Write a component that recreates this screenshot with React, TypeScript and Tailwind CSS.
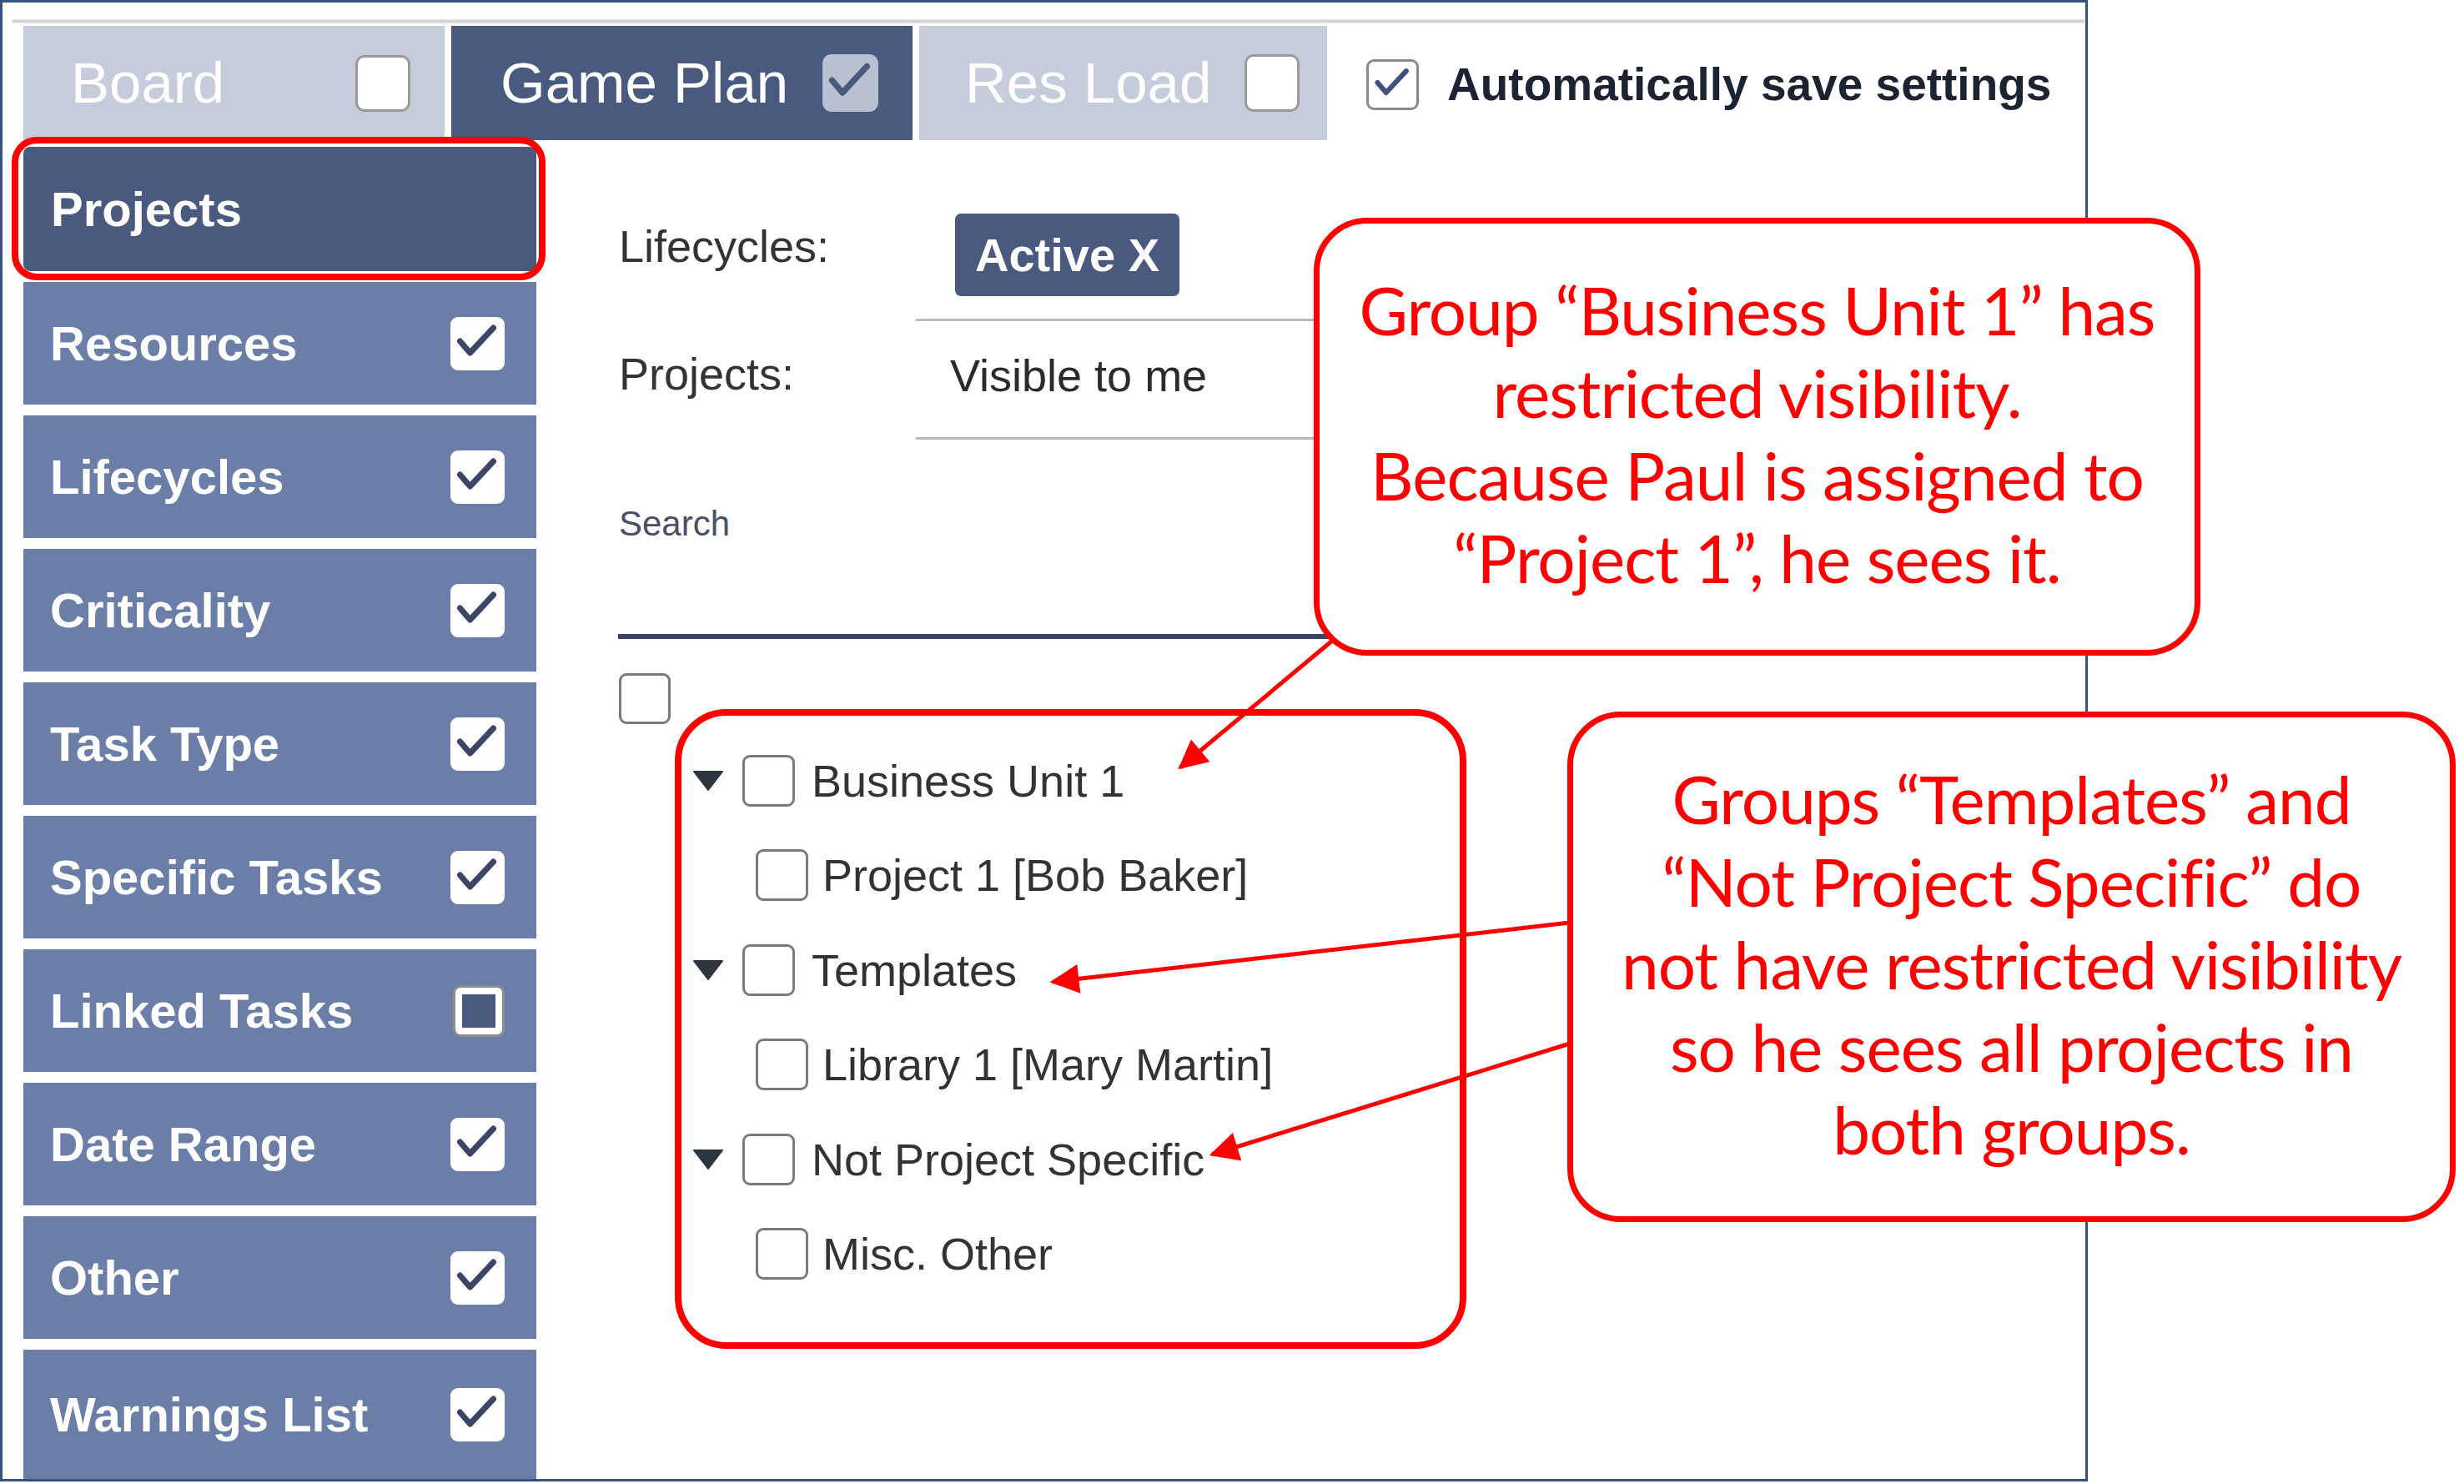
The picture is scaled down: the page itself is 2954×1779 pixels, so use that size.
import React from "react";

const Check = ({ color = "#3b4566", w = 7 }: { color?: string; w?: number }) => (
  <svg viewBox="0 0 64 64" className="w-full h-full">
    <path d="M11 29 L23 43 L51 13" fill="none" stroke={color} strokeWidth={w} strokeLinecap="round" strokeLinejoin="round" />
  </svg>
);

const Box = ({ className = "" }: { className?: string }) => (
  <div className={"shrink-0 w-[63px] h-[62px] rounded-[9px] border-[3px] border-[#7b7b7b] bg-white " + className} />
);

const Tri = () => (
  <svg viewBox="0 0 36 24" className="w-[36px] h-[24px] shrink-0">
    <polygon points="1,1 35,1 18,23" fill="#2d3540" stroke="#2d3540" strokeWidth="2" strokeLinejoin="round" />
  </svg>
);

type Item = { label: string; state: "check" | "ind" };
const items: Item[] = [
  { label: "Resources", state: "check" },
  { label: "Lifecycles", state: "check" },
  { label: "Criticality", state: "check" },
  { label: "Task Type", state: "check" },
  { label: "Specific Tasks", state: "check" },
  { label: "Linked Tasks", state: "ind" },
  { label: "Date Range", state: "check" },
  { label: "Other", state: "check" },
];

const SideCheck = ({ state }: { state: "check" | "ind" }) =>
  state === "check" ? (
    <div className="w-[65px] h-[64px] rounded-[9px] bg-white shrink-0 p-0">
      <Check />
    </div>
  ) : (
    <div className="w-[62px] h-[62px] rounded-[9px] bg-white border-[3px] border-[#8d8d8d] shrink-0 flex items-center justify-center">
      <div className="w-[40px] h-[40px] bg-[#4a5a7e]" />
    </div>
  );

const TreeGroup = ({ label }: { label: string }) => (
  <div className="h-[113.5px] flex items-center pl-[14px]">
    <Tri />
    <Box className="ml-[23px]" />
    <span className="ml-[20px] text-[54px] text-[#333] leading-none">{label}</span>
  </div>
);

const TreeChild = ({ label }: { label: string }) => (
  <div className="h-[113.5px] flex items-center pl-[89px]">
    <Box />
    <span className="ml-[17px] text-[54px] text-[#333] leading-none">{label}</span>
  </div>
);

export default function App() {
  return (
    <div className="w-[2954px] h-[1779px] bg-white relative overflow-hidden font-['Liberation_Sans',Arial,sans-serif]">
      <div className="w-[2503px] h-[1776px] border-[3px] border-[#36527e] flex flex-col">
        <div className="pt-[21px] pl-[12px] pr-[1px]">
          <div className="h-[3px] bg-[#d2d2d2] shadow-[0_0_3px_#c8c8c8]" />
        </div>
        {/* tabs */}
        <div className="mt-[4px] pl-[25px] flex items-center h-[137px]">
          <div className="w-[505px] h-full bg-[#c5cddc] flex items-center justify-between pl-[57px] pr-[41px]">
            <span className="text-white text-[69px] leading-none">Board</span>
            <div className="w-[66px] h-[68px] rounded-[11px] bg-white border-[3px] border-[#9a9a9a]" />
          </div>
          <div className="ml-[8px] w-[553px] h-full bg-[#4a5a7e] flex items-center justify-between pl-[59px] pr-[41px]">
            <span className="text-white text-[69px] leading-none">Game Plan</span>
            <div className="w-[67px] h-[69px] rounded-[11px] bg-[#b9c0d1]">
              <Check color="#4a5a7e" />
            </div>
          </div>
          <div className="ml-[8px] w-[489px] h-full bg-[#c5cddc] flex items-center justify-between pl-[55px] pr-[33px]">
            <span className="text-white text-[69px] leading-none">Res Load</span>
            <div className="w-[66px] h-[69px] rounded-[11px] bg-white border-[3px] border-[#9a9a9a]" />
          </div>
          <div className="ml-[47px] mt-[4px] w-[63px] h-[61px] rounded-[9px] bg-white border-[3px] border-[#8a8a8a]">
            <Check color="#3f5080" />
          </div>
          <span className="ml-[34px] mt-[4px] text-[55px] font-bold text-[#1c2333] leading-none">Automatically save settings</span>
        </div>
        {/* body */}
        <div className="mt-[8px] flex flex-1 min-h-0">
          <div className="ml-[25px] w-[615px] flex flex-col gap-[13px]">
            <div className="relative h-[149px] shrink-0 bg-[#4a5a7e] rounded-[8px] flex items-center pl-[33px]">
              <span className="text-white text-[58px] font-bold leading-none">Projects</span>
              <div className="absolute -left-[14px] -right-[11px] -top-[12px] -bottom-[11px] border-[8px] border-[#ff0000] rounded-[30px]" />
            </div>
            {items.map((it) => (
              <div key={it.label} className="h-[147px] shrink-0 bg-[#6b7ea7] flex items-center justify-between pl-[32px] pr-[38px]">
                <span className="text-white text-[58px] font-bold leading-none">{it.label}</span>
                <SideCheck state={it.state} />
              </div>
            ))}
            <div className="flex-1 bg-[#6b7ea7] flex items-center justify-between pl-[32px] pr-[38px]">
              <span className="text-white text-[58px] font-bold leading-none">Warnings List</span>
              <SideCheck state="check" />
            </div>
          </div>
          {/* main */}
          <div className="ml-[99px] flex-1 flex flex-col">
            <div className="h-[209px] flex">
              <div className="w-[356px] pt-[92px] text-[54px] leading-[54px] text-[#333]">Lifecycles:</div>
              <div className="flex-1 border-b-[3px] border-[#b9b9b9] pt-[80px] pl-[47px]">
                <div className="inline-flex items-center h-[99px] px-[24px] bg-[#4a5a7e] rounded-[7px] text-white text-[56px] font-bold leading-none">
                  Active X
                </div>
              </div>
            </div>
            <div className="h-[142px] flex">
              <div className="w-[356px] pt-[36px] text-[54px] leading-[54px] text-[#333]">Projects:</div>
              <div className="flex-1 border-b-[3px] border-[#b9b9b9] pt-[38px] pl-[41px] text-[54px] leading-[54px] text-[#2b2b2b]">
                Visible to me
              </div>
            </div>
            <div className="mt-[80px] text-[42px] leading-[42px] text-[#4b4f63]">Search</div>
            <div className="mt-[111px] h-[6px] bg-[#3d4266] -ml-[1px]" />
            <div className="mt-[41px] w-[62px] h-[61px] rounded-[9px] border-[3px] border-[#7b7b7b] bg-white" />
            <div className="ml-[67px] -mt-[18px] w-[949px] h-[767px] border-[8px] border-[#ff0000] rounded-[62px] pt-[21px]">
              <TreeGroup label="Business Unit 1" />
              <TreeChild label="Project 1 [Bob Baker]" />
              <TreeGroup label="Templates" />
              <TreeChild label="Library 1 [Mary Martin]" />
              <TreeGroup label="Not Project Specific" />
              <TreeChild label="Misc. Other" />
            </div>
          </div>
        </div>
      </div>

      {/* callouts */}
      <div className="absolute left-[1575px] top-[261px] w-[1063px] h-[525px] border-[7px] border-[#ff0000] rounded-[64px] bg-white flex items-center justify-center text-center font-['Lato',sans-serif] text-[#ff0000] text-[80px] leading-[99px] tracking-[-1px]">
        <div className="mb-[8px]">
          Group “Business Unit 1” has
          <br />
          restricted visibility.
          <br />
          Because Paul is assigned to
          <br />
          “Project 1”, he sees it.
        </div>
      </div>
      <div className="absolute left-[1879px] top-[853px] w-[1065px] h-[612px] border-[7px] border-[#ff0000] rounded-[64px] bg-white flex items-center justify-center text-center font-['Lato',sans-serif] text-[#ff0000] text-[80px] leading-[99px] tracking-[-1px]">
        <div className="mb-[8px]">
          Groups “Templates” and
          <br />
          “Not Project Specific” do
          <br />
          not have restricted visibility
          <br />
          so he sees all projects in
          <br />
          both groups.
        </div>
      </div>

      {/* arrows */}
      <svg className="absolute left-0 top-0 w-[2954px] h-[1779px] pointer-events-none" viewBox="0 0 2954 1779">
        <defs>
          <marker id="ah" viewBox="0 0 10 10" refX="9" refY="5" markerWidth="9" markerHeight="7" orient="auto" markerUnits="strokeWidth">
            <path d="M0 0 L10 5 L0 10 z" fill="#ff0000" />
          </marker>
        </defs>
        <line x1="1596" y1="769" x2="1415" y2="920" stroke="#ff0000" strokeWidth="5" markerEnd="url(#ah)" />
        <line x1="1882" y1="1106" x2="1262" y2="1177" stroke="#ff0000" strokeWidth="5" markerEnd="url(#ah)" />
        <line x1="1882" y1="1251" x2="1453" y2="1384" stroke="#ff0000" strokeWidth="5" markerEnd="url(#ah)" />
      </svg>
    </div>
  );
}
